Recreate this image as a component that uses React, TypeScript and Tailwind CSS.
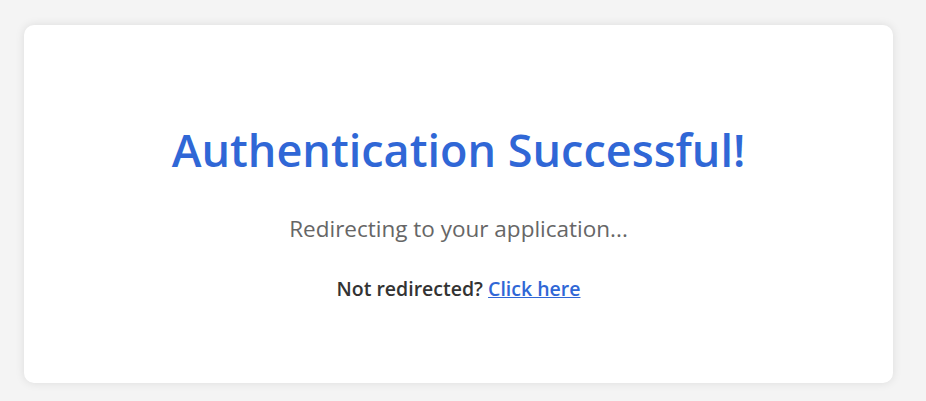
export default function App() {
  return (
    <div className="min-h-[401px] bg-[#f4f4f4] pl-6 pt-[25px] font-['Open_Sans','Noto_Sans',sans-serif]">
      <div className="flex h-[358px] w-[869px] flex-col items-center rounded-[10px] bg-white pt-[97px] text-center shadow-[0_0_10px_rgba(0,0,0,0.1)]">
        <h1 className="text-[45px] font-semibold leading-[56px] text-[#3067d6]">
          Authentication Successful!
        </h1>
        <p className="mt-[37px] text-[22.5px] leading-[28px] text-[#666666]">
          Redirecting to your application...
        </p>
        <p className="mt-[33px] text-[19.5px] font-semibold leading-[26px] text-[#333333]">
          Not redirected?{" "}
          <a href="#" className="text-[#3067d6] underline">
            Click here
          </a>
        </p>
      </div>
    </div>
  );
}
